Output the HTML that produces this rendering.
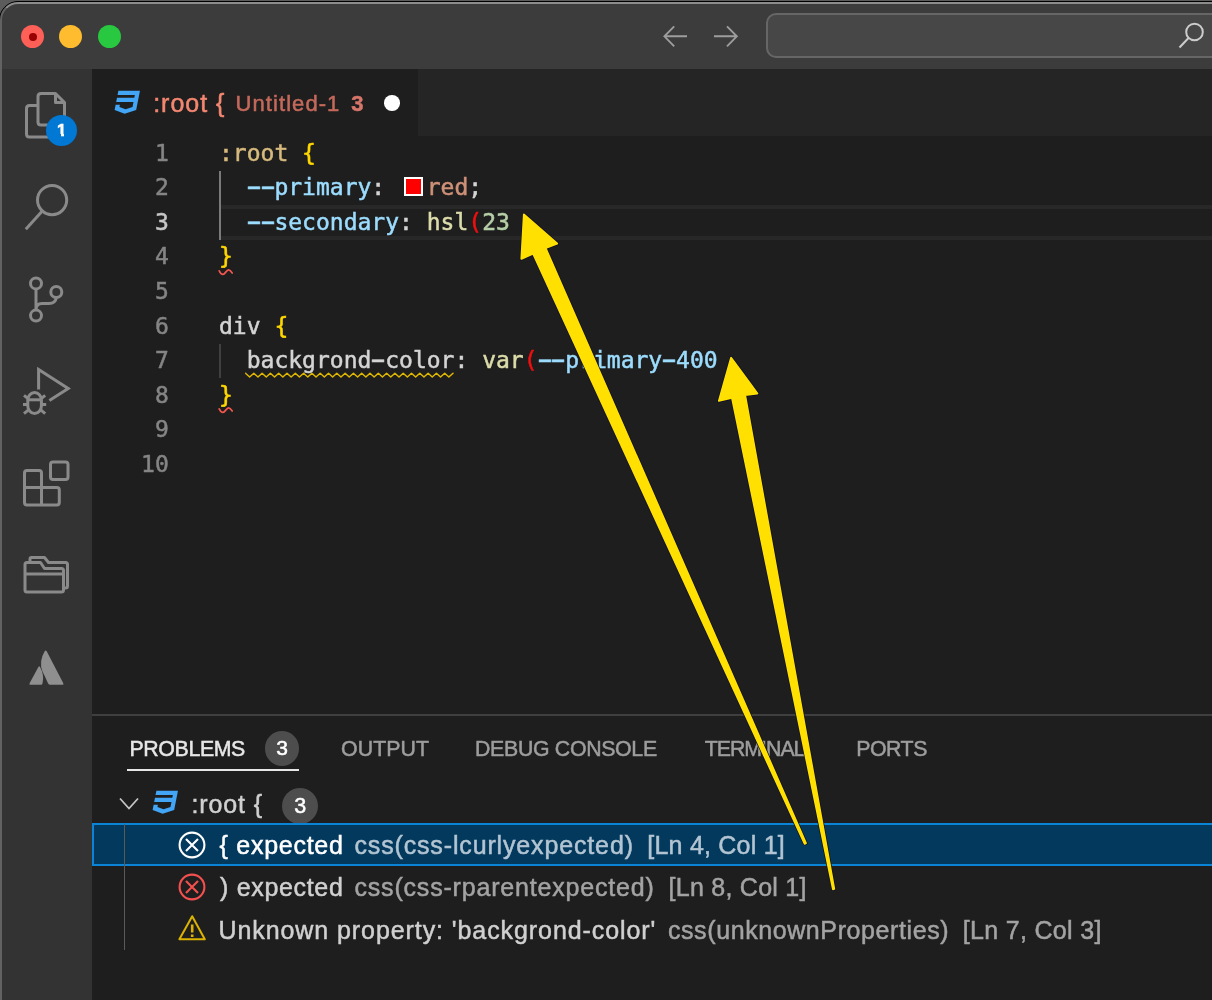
<!DOCTYPE html>
<html lang="en">
<head>
<meta charset="utf-8">
<title>:root { Untitled-1</title>
<style>
html,body{margin:0;padding:0;}
body{width:1212px;height:1000px;overflow:hidden;background:#5c5c5c;position:relative;
  font-family:"Liberation Sans",sans-serif;}
.abs{position:absolute;}
#win{position:absolute;left:-1px;top:1px;width:1300px;height:1100px;background:#1e1e1e;
  border:1px solid #000;border-radius:19px 0 0 0;overflow:hidden;box-sizing:border-box;}
#win .hl{position:absolute;left:0;top:0;width:1300px;height:1100px;border-radius:18px 0 0 0;
  box-sizing:border-box;border-top:2px solid #8c8c8c;border-left:2px solid #626262;pointer-events:none;z-index:50;}
#stage{position:absolute;left:0;top:-2px;width:1212px;height:1000px;will-change:transform;}
#titlebar{left:0;top:0;width:1212px;height:69px;background:#3c3c3c;}
.tl{position:absolute;width:23px;height:23px;border-radius:50%;top:25px;}
#searchbox{left:766px;top:13px;width:470px;height:45px;box-sizing:border-box;border:2px solid #666666;border-radius:10px;background:#474747;}
#activity{left:0;top:69px;width:92px;height:931px;background:#333333;}
#tabs{left:92px;top:69px;width:1120px;height:67px;background:#252526;}
#tab{left:92px;top:69px;width:326px;height:67px;background:#1e1e1e;}
.ui{font-family:"Liberation Sans",sans-serif;white-space:pre;line-height:1;-webkit-text-stroke:0.5px currentColor;}
.code{font-family:"DejaVu Sans Mono","Liberation Mono",monospace;font-size:23px;white-space:pre;line-height:34.45px;height:34.45px;color:#d4d4d4;-webkit-text-stroke:0.5px currentColor;}
.ln{position:absolute;left:100.3px;width:68.5px;text-align:right;color:#858585;}
.cl{position:absolute;left:219px;}
.hy{display:inline-block;transform:translateY(-0.8px) scale(1.95,1.22);}
.c-sel{color:#d7ba7d}.c-br{color:#ffd700}.c-prop{color:#9cdcfe}.c-val{color:#ce9178}.c-fn{color:#dcdcaa}.c-num{color:#b5cea8}.c-err{color:#f00f0f}.c-w{color:#d4d4d4}
.ptab{position:absolute;font-size:21.3px;color:#9d9d9d;}
.rt{position:absolute;font-size:25px;color:#d0d0d0;}
.dim{color:#a3a3a3}
.badge{position:absolute;width:34.5px;height:34.5px;border-radius:50%;background:#4d4d4d;color:#fff;text-align:center;}
</style>
</head>
<body>
<div id="win">
<div id="stage">
<!-- TITLEBAR -->
<div id="titlebar" class="abs"></div>
<div class="tl" style="left:21px;background:#fe5f57;"></div>
<div class="abs" style="left:28.5px;top:32.5px;width:8px;height:8px;border-radius:50%;background:#990001;"></div>
<div class="tl" style="left:59px;background:#febc2e;"></div>
<div class="tl" style="left:98px;background:#28c840;"></div>
<svg class="abs" style="left:660px;top:22px" width="84" height="30" viewBox="0 0 84 30" fill="none" stroke="#9d9d9d" stroke-width="1.9" stroke-linecap="butt" stroke-linejoin="miter">
  <path d="M27 14.3H4.6M14.2 4.3L4.4 14.3L14.2 24.3"/>
  <path d="M54 14.3H76.6M67 4.3L76.8 14.3L67 24.3"/>
</svg>
<div id="searchbox" class="abs"></div>
<svg class="abs" style="left:1175px;top:19.600000px" width="34" height="32" viewBox="0 0 34 32" fill="none" stroke="#cccccc" stroke-width="2">
  <circle cx="19.5" cy="12" r="8.3"/><path d="M13.5 18L4.5 27.5"/>
</svg>
<!-- ACTIVITY -->
<div id="activity" class="abs"></div>
<svg class="abs" style="left:20px;top:86px" width="60" height="64" viewBox="0 0 60 64" fill="none" stroke="#8a8a8a" stroke-width="3" stroke-linejoin="round">
  <path d="M18 19.5H9.5Q6.5 19.5 6.5 22.5V48Q6.5 51 9.5 51H30"/>
  <path d="M21 7.5H35.5L44.5 16.5V36Q44.5 39 41.5 39H21Q18 39 18 36V10.5Q18 7.5 21 7.5Z"/>
  <path d="M35.5 7.5V16.5H44.5"/>
</svg>
<div class="abs" style="left:46px;top:115px;width:31px;height:31px;border-radius:50%;background:#0078d4;"></div>
<div class="abs ui" style="left:46px;top:122px;width:31px;text-align:center;font-size:16.5px;font-weight:bold;color:#fff;">1</div>
<div class="abs" style="left:56.5px;top:134px;width:4.7px;height:3.4px;background:#0078d4;"></div><div class="abs" style="left:64.3px;top:134px;width:3px;height:3.4px;background:#0078d4;"></div>
<svg class="abs" style="left:20px;top:180px" width="56" height="56" viewBox="0 0 56 56" fill="none" stroke="#8a8a8a" stroke-width="3">
  <circle cx="32.1" cy="20.1" r="14.6"/><path d="M22.3 31L5.800000 49.200000"/>
</svg>
<svg class="abs" style="left:24px;top:272px" width="48" height="56" viewBox="0 0 48 56" fill="none" stroke="#8a8a8a" stroke-width="3">
  <circle cx="12" cy="11.4" r="5.5"/><circle cx="32.3" cy="20" r="5.5"/><circle cx="12" cy="43.600000" r="5.5"/>
  <path d="M12 17V38M32.3 26Q31.3 31.5 25 31.5H18Q12 31.5 12 38"/>
</svg>
<svg class="abs" style="left:18px;top:362px" width="60" height="60" viewBox="0 0 60 60" fill="none" stroke="#8a8a8a" stroke-width="3" stroke-linejoin="miter">
  <path d="M20.6 27.4V7.6L50.2 26.4L31.4 38.4"/>
  <rect x="9.800000" y="30.400000" width="13.600000" height="21.200000" rx="6.800000" ry="7.600000"/>
  <path d="M9.800000 37.800000H23.400000"/>
  <path d="M10.2 42.4H5M23 42.4H28.2M10.6 37L6 33.4M22.6 37L27.2 33.4M10.8 47.6L6 51.6M22.4 47.6L27.2 51.6"/>
</svg>
<svg class="abs" style="left:20px;top:456px" width="56" height="56" viewBox="0 0 56 56" fill="none" stroke="#8a8a8a" stroke-width="3" stroke-linejoin="round">
  <path d="M7 14.5H19Q21.5 14.5 21.5 17V31.5H36.8Q39.3 31.5 39.3 34V46.600000Q39.3 49.100000 36.8 49.100000H7Q4.500000 49.100000 4.500000 46.600000V17Q4.500000 14.5 7 14.5Z"/>
  <path d="M4.500000 31.5H21.5V49.100000"/>
  <rect x="30.5" y="6" width="17.5" height="17.5" rx="2.5"/>
</svg>
<svg class="abs" style="left:20px;top:552px" width="56" height="48" viewBox="0 0 56 48" fill="none" stroke="#8a8a8a" stroke-width="3" stroke-linejoin="round">
  <path d="M10 10V7Q10 5.5 11.5 5.5H24.5L28.5 10.5H45.5Q47.5 10.5 47.5 12.5V34Q47.5 36 45.5 36H44"/>
  <path d="M7 10.5H20.5L24.5 16.5H41.5Q43.5 16.5 43.5 18.5V38Q43.5 40 41.5 40H7Q5 40 5 38V12.5Q5 10.5 7 10.5Z"/>
  <path d="M5 22H43.5"/>
</svg>
<svg class="abs" style="left:24px;top:646px" width="44" height="44" viewBox="0 0 44 44" fill="#8f8f8f">
  <path d="M14.5 20.8Q15.3 19.6 16 20.9Q20.5 28.5 18.5 37.5Q18.2 38.7 17 38.7H6.5Q4.8 38.7 5.6 37.2Z"/>
  <path d="M20.7 5.2Q21.7 3.7 22.7 5.2L39.3 37.2Q40 38.7 38.4 38.7H25.8Q24.6 38.7 24.1 37.600000Q21.5 31.5 18.5 25.5Q14.5 15.5 20.7 5.2Z"/>
</svg>
<!-- TABS -->
<div id="tabs" class="abs"></div>
<div id="tab" class="abs"></div>
<svg class="abs" style="left:111.700000px;top:87.400000px" width="30.6" height="30.6" viewBox="0 0 24 24"><path fill="#42a5f5" d="M5,3L4.35,6.34H17.94L17.5,8.5H3.92L3.26,11.83H16.85L16.09,15.64L10.61,17.45L5.86,15.64L6.19,14H2.85L2.06,18L9.91,21L18.96,18L20.16,11.97L20.4,10.76L21.94,3H5Z"/></svg>
<div id="t1" class="abs ui" style="left:153.20px;top:91.30px;letter-spacing:0.975px;font-size:25px;color:#f48771;">:root {</div>
<div id="t2" class="abs ui" style="left:235.50px;top:93.30px;letter-spacing:1.078px;font-size:22px;color:#c4695b;">Untitled-1</div>
<div id="t3" class="abs ui" style="left:351.15px;top:93.30px;letter-spacing:0.000px;font-size:22px;color:#d6766a;font-weight:bold;">3</div>
<div class="abs" style="left:384px;top:95.1px;width:15.6px;height:15.6px;border-radius:50%;background:#ffffff;"></div>
<!-- EDITOR -->
<div class="abs" style="left:219px;top:205px;width:1000px;height:35px;box-sizing:border-box;border-top:4px solid #282828;border-bottom:4px solid #282828;"></div>
<div class="abs" style="left:219px;top:171.4px;width:2px;height:68.6px;background:#7a7a7a;"></div>
<div class="abs" style="left:219px;top:344px;width:2px;height:33.6px;background:#404040;"></div>
<div class="code ln" style="top:135.9px;color:#858585">1</div><div class="code cl" id="L1" style="top:135.9px"><span class="c-sel">:root</span> <span class="c-br">{</span></div>
<div class="code ln" style="top:170.42px;color:#858585">2</div><div class="code cl" id="L2" style="top:170.42px">  <span class="c-prop"><span class="hy">-</span><span class="hy">-</span>primary</span>:   <span class="c-val">red</span>;</div>
<div class="code ln" style="top:204.94px;color:#c6c6c6">3</div><div class="code cl" id="L3" style="top:204.94px">  <span class="c-prop"><span class="hy">-</span><span class="hy">-</span>secondary</span>: <span class="c-fn">hsl</span><span class="c-err">(</span><span class="c-num">23</span></div>
<div class="code ln" style="top:239.46px;color:#858585">4</div><div class="code cl" id="L4" style="top:239.46px"><span class="c-br">}</span></div>
<div class="code ln" style="top:273.98px;color:#858585">5</div>
<div class="code ln" style="top:308.5px;color:#858585">6</div><div class="code cl" id="L6" style="top:308.5px"><span class="c-w">div</span> <span class="c-br">{</span></div>
<div class="code ln" style="top:343.02px;color:#858585">7</div><div class="code cl" id="L7" style="top:343.02px">  <span class="c-w" id="bgc">backgrond<span class="hy">-</span>color</span>: <span class="c-fn">var</span><span class="c-err">(</span><span class="c-prop"><span class="hy">-</span><span class="hy">-</span>primary<span class="hy">-</span>400</span></div>
<div class="code ln" style="top:377.54px;color:#858585">8</div><div class="code cl" id="L8" style="top:377.54px"><span class="c-br">}</span></div>
<div class="code ln" style="top:412.06px;color:#858585">9</div>
<div class="code ln" style="top:446.58px;color:#858585">10</div>
<div class="abs" style="left:404px;top:177px;width:18.5px;height:19px;box-sizing:border-box;border:2px solid #ffffff;background:#ff0000;"></div>
<svg class="abs" style="left:218px;top:267.66px" width="18" height="10" viewBox="0 0 18 10" fill="none" stroke="#f4574d" stroke-width="1.7" stroke-linecap="round"><path d="M1.2 2.8C2.5 5.5 3.5 6.6 5 6.4C7 6.2 8.5 2 10.500000 1.800000C12 1.700000 13 3 14.200000 5"/></svg>
<svg class="abs" style="left:218px;top:405.74px" width="18" height="10" viewBox="0 0 18 10" fill="none" stroke="#f4574d" stroke-width="1.7" stroke-linecap="round"><path d="M1.2 2.8C2.5 5.5 3.5 6.6 5 6.4C7 6.2 8.5 2 10.500000 1.800000C12 1.700000 13 3 14.200000 5"/></svg>
<svg class="abs" style="left:245px;top:372.22px" width="216" height="8" viewBox="0 0 216 8" fill="none" stroke="#dfb700" stroke-width="1.5" stroke-linejoin="round" stroke-linecap="round"><path d="M0.5 1.2L4.65 5.0L8.80 1.2L12.95 5.0L17.10 1.2L21.25 5.0L25.40 1.2L29.55 5.0L33.70 1.2L37.85 5.0L42.00 1.2L46.15 5.0L50.30 1.2L54.45 5.0L58.60 1.2L62.75 5.0L66.90 1.2L71.05 5.0L75.20 1.2L79.35 5.0L83.50 1.2L87.65 5.0L91.80 1.2L95.95 5.0L100.10 1.2L104.25 5.0L108.40 1.2L112.55 5.0L116.70 1.2L120.85 5.0L125.00 1.2L129.15 5.0L133.30 1.2L137.45 5.0L141.60 1.2L145.75 5.0L149.90 1.2L154.05 5.0L158.20 1.2L162.35 5.0L166.50 1.2L170.65 5.0L174.80 1.2L178.95 5.0L183.10 1.2L187.25 5.0L191.40 1.2L195.55 5.0L199.70 1.2L203.85 5.0L208.00 1.2"/></svg>
<!-- PANEL -->
<div class="abs" style="left:92px;top:714px;width:1120px;height:2px;background:#3f3f3f;"></div>
<div class="badge ui" style="left:264.8px;top:731px;font-size:21px;line-height:34.5px;">3</div>
<div class="abs" style="left:126.7px;top:769px;width:172.7px;height:2px;background:#e7e7e7;"></div>
<svg class="abs" style="left:117px;top:794px" width="24" height="20" viewBox="0 0 24 20" fill="none" stroke="#c5c5c5" stroke-width="1.8"><path d="M3 4.5L12 14.5L21 4.5"/></svg>
<svg class="abs" style="left:150px;top:787.2px" width="30.6" height="30.6" viewBox="0 0 24 24"><path fill="#42a5f5" d="M5,3L4.35,6.34H17.94L17.5,8.5H3.92L3.26,11.83H16.85L16.09,15.64L10.61,17.45L5.86,15.64L6.19,14H2.85L2.06,18L9.91,21L18.96,18L20.16,11.97L20.4,10.76L21.94,3H5Z"/></svg>
<div class="badge ui" style="left:282.2px;top:787.5px;width:36px;height:36px;font-size:21.5px;line-height:36px;">3</div>
<div class="abs" style="left:92px;top:823px;width:1130px;height:43px;box-sizing:border-box;background:#04395e;border:2px solid #0a84d6;"></div>
<div class="abs" style="left:123.7px;top:824px;width:1.3px;height:126px;background:#5a5a5a;"></div>
<svg class="abs" style="left:176.800000px;top:829.5px" width="30" height="30" viewBox="0 0 30 30" fill="none" stroke="#ffffff" stroke-width="2.1"><circle cx="15" cy="15" r="12.400000"/><path d="M9 9L21 21M21 9L9 21"/></svg>
<svg class="abs" style="left:176.800000px;top:872px" width="30" height="30" viewBox="0 0 30 30" fill="none" stroke="#f4504f" stroke-width="2.1"><circle cx="15" cy="15" r="12.400000"/><path d="M9 9L21 21M21 9L9 21"/></svg>
<svg class="abs" style="left:176px;top:913px" width="32" height="30" viewBox="0 0 32 30" fill="none" stroke="#dcb400" stroke-width="2" stroke-linejoin="round"><path d="M16.200000 3.200000L28.800000 26.300000H3.400000Z"/><path d="M16.200000 11.500000V19.500000M16.200000 21.600000V24" stroke-width="2.600000"/></svg>
<div id="p1" class="ptab ui" style="left:129.50px;top:739.30px;letter-spacing:-0.364px;color:#e7e7e7;">PROBLEMS</div>
<div id="p2" class="ptab ui" style="left:341.10px;top:739.30px;letter-spacing:0.070px;">OUTPUT</div>
<div id="p3" class="ptab ui" style="left:475.04px;top:739.30px;letter-spacing:-0.312px;">DEBUG CONSOLE</div>
<div id="p4" class="ptab ui" style="left:704.75px;top:739.30px;letter-spacing:-1.000px;">TERMINAL</div>
<div id="p5" class="ptab ui" style="left:856.19px;top:739.30px;letter-spacing:-0.450px;">PORTS</div>
<div id="r0" class="rt ui" style="left:191.50px;top:791.80px;letter-spacing:0.875px;">:root {</div>
<div id="r1a" class="rt ui" style="left:219.50px;top:832.50px;letter-spacing:0.733px;color:#ffffff;">{ expected</div>
<div id="r1b" class="rt ui" style="left:354.45px;top:832.50px;letter-spacing:0.852px;color:#b3c5d2;">css(css-lcurlyexpected)</div>
<div id="r1c" class="rt ui" style="left:647.30px;top:832.50px;letter-spacing:0.221px;color:#b3c5d2;">[Ln 4, Col 1]</div>
<div id="r2a" class="rt ui" style="left:220.00px;top:875.10px;letter-spacing:0.678px;">) expected</div>
<div id="r2b" class="rt ui dim" style="left:354.45px;top:875.10px;letter-spacing:0.815px;">css(css-rparentexpected)</div>
<div id="r2c" class="rt ui dim" style="left:668.59px;top:875.10px;letter-spacing:0.250px;">[Ln 8, Col 1]</div>
<div id="r3a" class="rt ui" style="left:218.50px;top:917.50px;letter-spacing:0.919px;">Unknown property: 'backgrond-color'</div>
<div id="r3b" class="rt ui dim" style="left:667.94px;top:917.50px;letter-spacing:0.593px;">css(unknownProperties)</div>
<div id="r3c" class="rt ui dim" style="left:962.70px;top:917.50px;letter-spacing:0.321px;">[Ln 7, Col 3]</div>
<!-- ARROWS -->
<svg class="abs" style="left:0;top:0" width="1212" height="1000" viewBox="0 0 1212 1000">
  <g fill="#0d0d26" stroke="#0d0d26" stroke-width="3.4" stroke-linejoin="round">
    <path d="M523.9 214.5L521.4 258.8L533.1 253.6L804.7 843.8L805.9 843.2L545.5 248.0L557.1 243.6Z"/>
    <path d="M731.1 357.8L718.9 400.9L732.0 397.8L833.0 889.2L834.2 888.9L745.1 395.1L757.4 393.5Z"/>
  </g>
  <g fill="#ffe000" stroke="#ffe000" stroke-width="2" stroke-linejoin="round">
    <path d="M523.9 214.5L521.4 258.8L533.1 253.6L804.7 843.8L805.9 843.2L545.5 248.0L557.1 243.6Z"/>
    <path d="M731.1 357.8L718.9 400.9L732.0 397.8L833.0 889.2L834.2 888.9L745.1 395.1L757.4 393.5Z"/>
  </g>
</svg>
</div>
<div class="hl"></div>
</div>
</body>
</html>
